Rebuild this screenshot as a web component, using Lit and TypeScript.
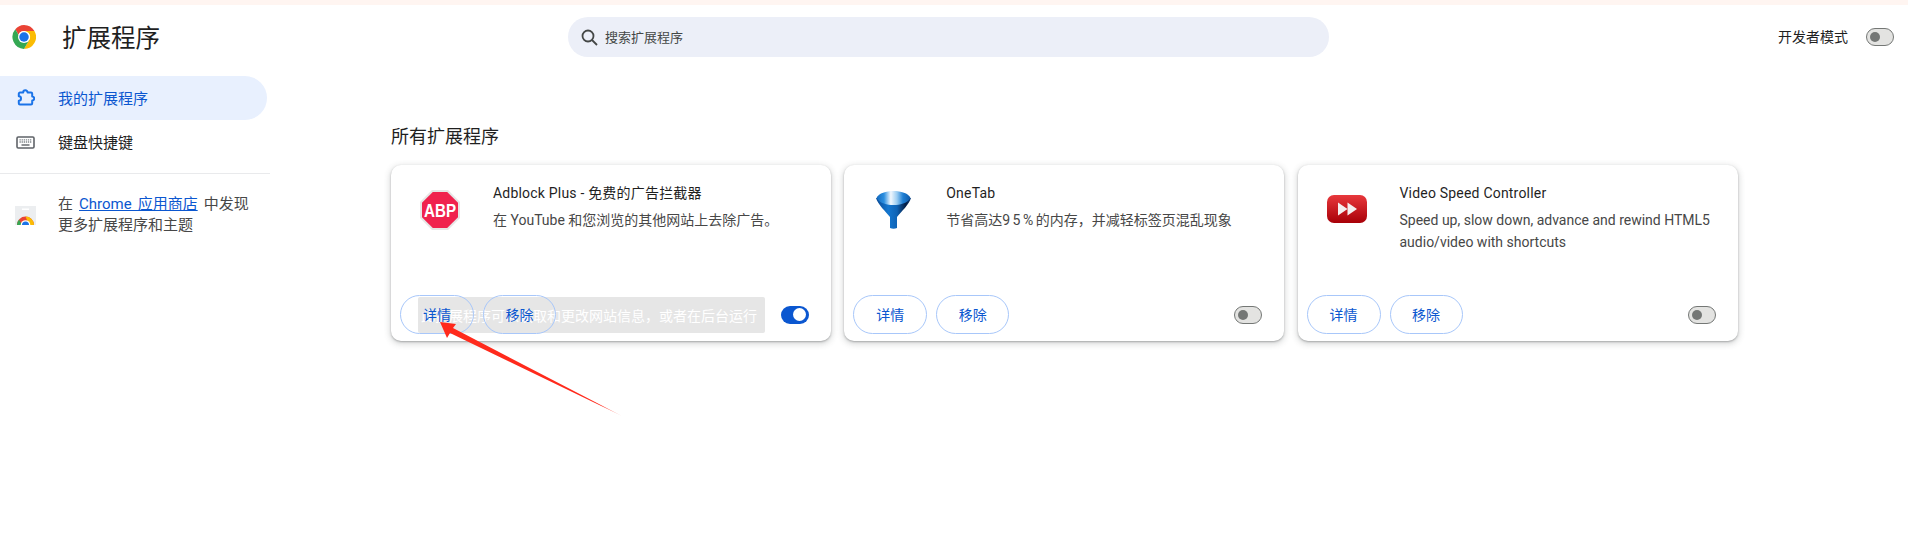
import { LitElement, html, css, svg } from "lit";
import { customElement } from "lit/decorators.js";

const chromeLogo = (size: number) => svg`
  <svg class="ic" width=${size} height=${size} viewBox="0 0 48 48">
    <circle cx="24" cy="24" r="24" fill="#fff"/>
    <path d="M24 0a24 24 0 0 1 20.8 12H24a12 12 0 0 0-11.1 7.4L6.6 8.6A24 24 0 0 1 24 0z" fill="#ea4335"/>
    <path d="M44.8 12A24 24 0 0 1 24 48l10.4-18A12 12 0 0 0 33 16l-9-4z" fill="#fbbc04"/>
    <path d="M6.6 8.6 17 26.6A12 12 0 0 0 34.4 30L24 48A24 24 0 0 1 6.6 8.6z" fill="#34a853"/>
    <circle cx="24" cy="24" r="12" fill="#fff"/>
    <circle cx="24" cy="24" r="9.5" fill="#1a73e8"/>
  </svg>`;

const abpIcon = svg`
  <svg class="ic" width="40" height="40" viewBox="0 0 40 40">
    <polygon points="12,0 28,0 40,12 40,28 28,40 12,40 0,28 0,12" fill="#e6e6e6"/>
    <polygon points="12.8,2 27.2,2 38,12.8 38,27.2 27.2,38 12.8,38 2,27.2 2,12.8" fill="#f0224e"/>
    <text x="20" y="26.500" text-anchor="middle" font-family="'Liberation Sans',sans-serif" font-weight="700" font-size="18" textLength="32" lengthAdjust="spacingAndGlyphs" fill="#fff">ABP</text>
  </svg>`;

const funnelIcon = svg`
  <svg class="ic" width="35" height="38" viewBox="0 0 35 38">
    <defs>
      <linearGradient id="fa" x1="0" x2="1" y1="0" y2="0">
        <stop offset="0" stop-color="#1268bd"/><stop offset=".22" stop-color="#2b8fe0"/>
        <stop offset=".42" stop-color="#f2f8fe"/><stop offset=".6" stop-color="#9ccdf2"/>
        <stop offset=".78" stop-color="#1f7fd4"/><stop offset="1" stop-color="#0c57a6"/>
      </linearGradient>
      <linearGradient id="fb" x1="0" x2="1" y1="0" y2="0">
        <stop offset="0" stop-color="#0b4a94"/><stop offset=".35" stop-color="#1477d0"/>
        <stop offset=".6" stop-color="#0f63b5"/><stop offset=".85" stop-color="#041c42"/><stop offset="1" stop-color="#0a3a78"/>
      </linearGradient>
    </defs>
    <path d="M0 7 C1.500 13 10 21 14 26 V37 Q17.500 38.500 21 37 V26 C25 21 33.500 13 35 7 Z" fill="url(#fb)"/>
    <path d="M0.500 7 C3 2 10 0 17.500 0 C25 0 32 2 34.500 7 C31 12.500 24 14 17.500 14 C11 14 4 12.500 0.500 7 Z" fill="url(#fa)"/>
  </svg>`;

const videoIcon = svg`
  <svg class="ic" width="40" height="28" viewBox="0 0 40 28">
    <defs>
      <linearGradient id="vr" x1="0" x2="0" y1="0" y2="1">
        <stop offset="0" stop-color="#e8383c"/><stop offset="1" stop-color="#a80008"/>
      </linearGradient>
    </defs>
    <rect width="40" height="28" rx="7" fill="url(#vr)"/>
    <polygon points="11,7.500 20.500,14 11,20.500" fill="#f4f0f0"/>
    <polygon points="20.500,7.500 30,14 20.500,20.500" fill="#f4f0f0"/>
  </svg>`;

@customElement("app-root")
export class AppRoot extends LitElement {
  static styles = css`
    :host {
      display: block;
      width: 1908px;
      height: 542px;
      overflow: hidden;
      position: relative;
      background: #fff;
      font-family: Roboto, "Noto Sans CJK SC", sans-serif;
      font-size: 14px;
      color: #1f1f1f;
    }
    .ic { display: block; flex: none; }
    .strip { height: 5px; background: #fff5f1; }
    .layout { display: flex; }
    .side { width: 270px; flex: none; }
    .brand { display: flex; align-items: center; gap: 26px; padding-left: 12px; height: 64px; }
    .brand h1 { margin: 0; padding-top: 4px; font-size: 24.500px; font-weight: 400; line-height: 32px; color: #1f1f1f; }
    .nav { margin-top: 7px; font-size: 15px; }
    .item { display: flex; align-items: center; height: 44px; width: 267px; padding: 1px 0 0 16px; box-sizing: border-box; gap: 23px; border-radius: 0 22px 22px 0; line-height: 20px; }
    .item.on { background: #e8f0fe; color: #0b57d0; }
    .divider { height: 1px; background: #e9eaec; margin-top: 9px; }
    .store { display: flex; align-items: center; gap: 22px; padding: 20px 0 0 15px; color: #474747; line-height: 21px; font-size: 15px; word-spacing: 2.300px; }
    .store a { color: #0b57d0; text-decoration: underline; }
    .main { flex: 1; min-width: 0; }
    .top { display: flex; align-items: flex-start; height: 120px; padding-top: 12px; box-sizing: border-box; }
    .search { margin-left: 298px; width: 761px; height: 40px; background: #eceff8; border-radius: 20px; display: flex; align-items: center; gap: 6px; padding-left: 12px; box-sizing: border-box; color: #444746; font-size: 13px; }
    .search span, .dev span { padding-bottom: 2px; }
    .dev { display: flex; align-items: center; gap: 18px; margin-left: 449px; height: 40px; white-space: nowrap; }
    .switch { width: 28px; height: 18px; border-radius: 9px; box-sizing: border-box; flex: none; display: flex; align-items: center; }
    .switch.off { background: #e3e3e1; border: 1.500px solid #747775; padding-left: 3px; }
    .switch.off i { width: 10px; height: 10px; background: #747775; border-radius: 50%; }
    .switch.onn { background: #0b57d0; justify-content: flex-end; padding-right: 3px; }
    .switch.onn i { width: 13px; height: 13px; background: #fff; border-radius: 50%; }
    .heading { margin: 0 0 0 121px; font-size: 18px; font-weight: 400; line-height: 24px; color: #1f1f1f; }
    .cards { display: flex; gap: 13.250px; margin: 16px 0 0 121px; }
    .card { width: 440px; height: 176px; background: #fff; border-radius: 10px; box-shadow: 0 1px 2px rgba(60,64,67,.35), 0 2px 6px 1px rgba(60,64,67,.2); display: flex; flex-direction: column; position: relative; box-sizing: border-box; flex: none; }
    .body { flex: 1; display: flex; }
    .logo { width: 98px; margin-right: 4px; flex: none; height: 100%; display: flex; justify-content: center; }
    .logo > * { margin-top: var(--t); }
    .txt { padding-top: 18px; min-width: 0; }
    .name { line-height: 20px; color: #1f1f1f; letter-spacing: .2px; }
    .desc { margin-top: 6px; line-height: 22px; color: #474747; }
    .pct { letter-spacing: 2.500px; }
    .foot { display: flex; align-items: center; height: 39px; padding: 0 22px 0 9px; margin-bottom: 7px; gap: 9px; position: relative; }
    .btn { width: 73px; height: 39px; border: 1px solid #a8c7fa; border-radius: 20px; background: transparent; color: #0b57d0; font: inherit; padding: 0 0 2px; position: relative; z-index: 2; }
    .btn.wide { width: 74px; }
    .foot .switch { margin-left: auto; }
    .toast { position: absolute; left: 27px; top: 2px; width: 347px; height: 36px; background: #e6e6e6; color: #fff; border-radius: 2px; display: flex; align-items: center; padding-left: 3px; box-sizing: border-box; white-space: nowrap; z-index: 1; }
    .arrow { position: absolute; left: 430px; top: 310px; z-index: 3; }
  `;

  private card(icon: unknown, top: number, name: string, desc: unknown, on: boolean, toast = "") {
    return html`
      <div class="card">
        <div class="body">
          <div class="logo" style="--t:${top}px">${icon}</div>
          <div class="txt">
            <div class="name">${name}</div>
            <div class="desc">${desc}</div>
          </div>
        </div>
        <div class="foot">
          ${toast ? html`<div class="toast">${toast}</div>` : ""}
          <button class="btn wide">详情</button>
          <button class="btn">移除</button>
          <div class="switch ${on ? "onn" : "off"}"><i></i></div>
        </div>
      </div>`;
  }

  render() {
    return html`
      <div class="strip"></div>
      <div class="layout">
        <aside class="side">
          <div class="brand">${chromeLogo(24)}<h1>扩展程序</h1></div>
          <nav class="nav">
            <div class="item on">
              <svg class="ic" width="19" height="19" viewBox="0 0 19 19" fill="none" stroke="#1a73e8" stroke-width="2" stroke-linejoin="round">
                <path d="M4 3.500h3.200a2.200 2.200 0 0 1 4.400 0H15a1.200 1.200 0 0 1 1.200 1.200v2.800a2 2 0 0 1 0 4v2.800A1.200 1.200 0 0 1 15 15.500H4a1.200 1.200 0 0 1-1.200-1.200v-2.600a2.200 2.200 0 0 0 0-4.400V4.700A1.200 1.200 0 0 1 4 3.500z"/>
              </svg>
              <span>我的扩展程序</span>
            </div>
            <div class="item">
              <svg class="ic" width="19" height="19" viewBox="0 0 19 19">
                <rect x="1" y="4" width="17" height="11" rx="1.200" fill="none" stroke="#5f6368" stroke-width="1.600"/>
                <path d="M3.500 6.800h12M3.500 9h12" stroke="#80868b" stroke-width="1.300" stroke-dasharray="1.300 .8"/>
                <path d="M5.500 12h8" stroke="#5f6368" stroke-width="1.400"/>
              </svg>
              <span>键盘快捷键</span>
            </div>
          </nav>
          <div class="divider"></div>
          <div class="store">
            <svg class="ic" width="21" height="19" viewBox="0 0 21 19">
              <rect width="21" height="19" fill="#eceef0"/>
              <rect x="7" y="2.500" width="7" height="1.500" fill="#fff"/>
              <path d="M2 19a8.500 8.500 0 0 1 8.500-8.500A8.500 8.500 0 0 1 19 19z" fill="#ea4335"/>
              <path d="M10.500 10.500A8.500 8.500 0 0 1 19 19h-5z" fill="#fbbc04"/>
              <path d="M2 19a8.500 8.500 0 0 1 2-5.500L7 19z" fill="#34a853"/>
              <circle cx="10.500" cy="19" r="4.800" fill="#fff"/>
              <circle cx="10.500" cy="19" r="3.500" fill="#1a73e8"/>
            </svg>
            <div>在 <a>Chrome 应用商店</a> 中发现<br />更多扩展程序和主题</div>
          </div>
        </aside>
        <main class="main">
          <div class="top">
            <div class="search">
              <svg class="ic" width="19" height="19" viewBox="0 0 19 19" fill="none" stroke="#444746" stroke-width="1.800">
                <circle cx="8" cy="8" r="5.500"/><path d="M12 12l5 5"/>
              </svg>
              <span>搜索扩展程序</span>
            </div>
            <div class="dev"><span>开发者模式</span><div class="switch off"><i></i></div></div>
          </div>
          <h2 class="heading">所有扩展程序</h2>
          <div class="cards">
            ${this.card(abpIcon, 25, "Adblock Plus - 免费的广告拦截器", "在 YouTube 和您浏览的其他网站上去除广告。", true, "此扩展程序可以读取和更改网站信息，或者在后台运行")}
            ${this.card(funnelIcon, 26, "OneTab", html`节省高达<span class="pct">95%</span>的内存，并减轻标签页混乱现象`, false)}
            ${this.card(videoIcon, 30, "Video Speed Controller", "Speed up, slow down, advance and rewind HTML5 audio/video with shortcuts", false)}
          </div>
        </main>
      </div>
      <svg class="arrow" width="200" height="115" viewBox="430 310 200 115">
        <defs>
          <linearGradient id="ar" gradientUnits="userSpaceOnUse" x1="440" y1="322" x2="622" y2="416">
            <stop offset="0" stop-color="#ff2a1c"/><stop offset=".88" stop-color="#ff2a1c"/><stop offset="1" stop-color="#ff2a1c" stop-opacity=".25"/>
          </linearGradient>
        </defs>
        <polygon points="440,322 456,324 453,328 622,416 450,333 447,338" fill="url(#ar)"/>
      </svg>
    `;
  }
}
